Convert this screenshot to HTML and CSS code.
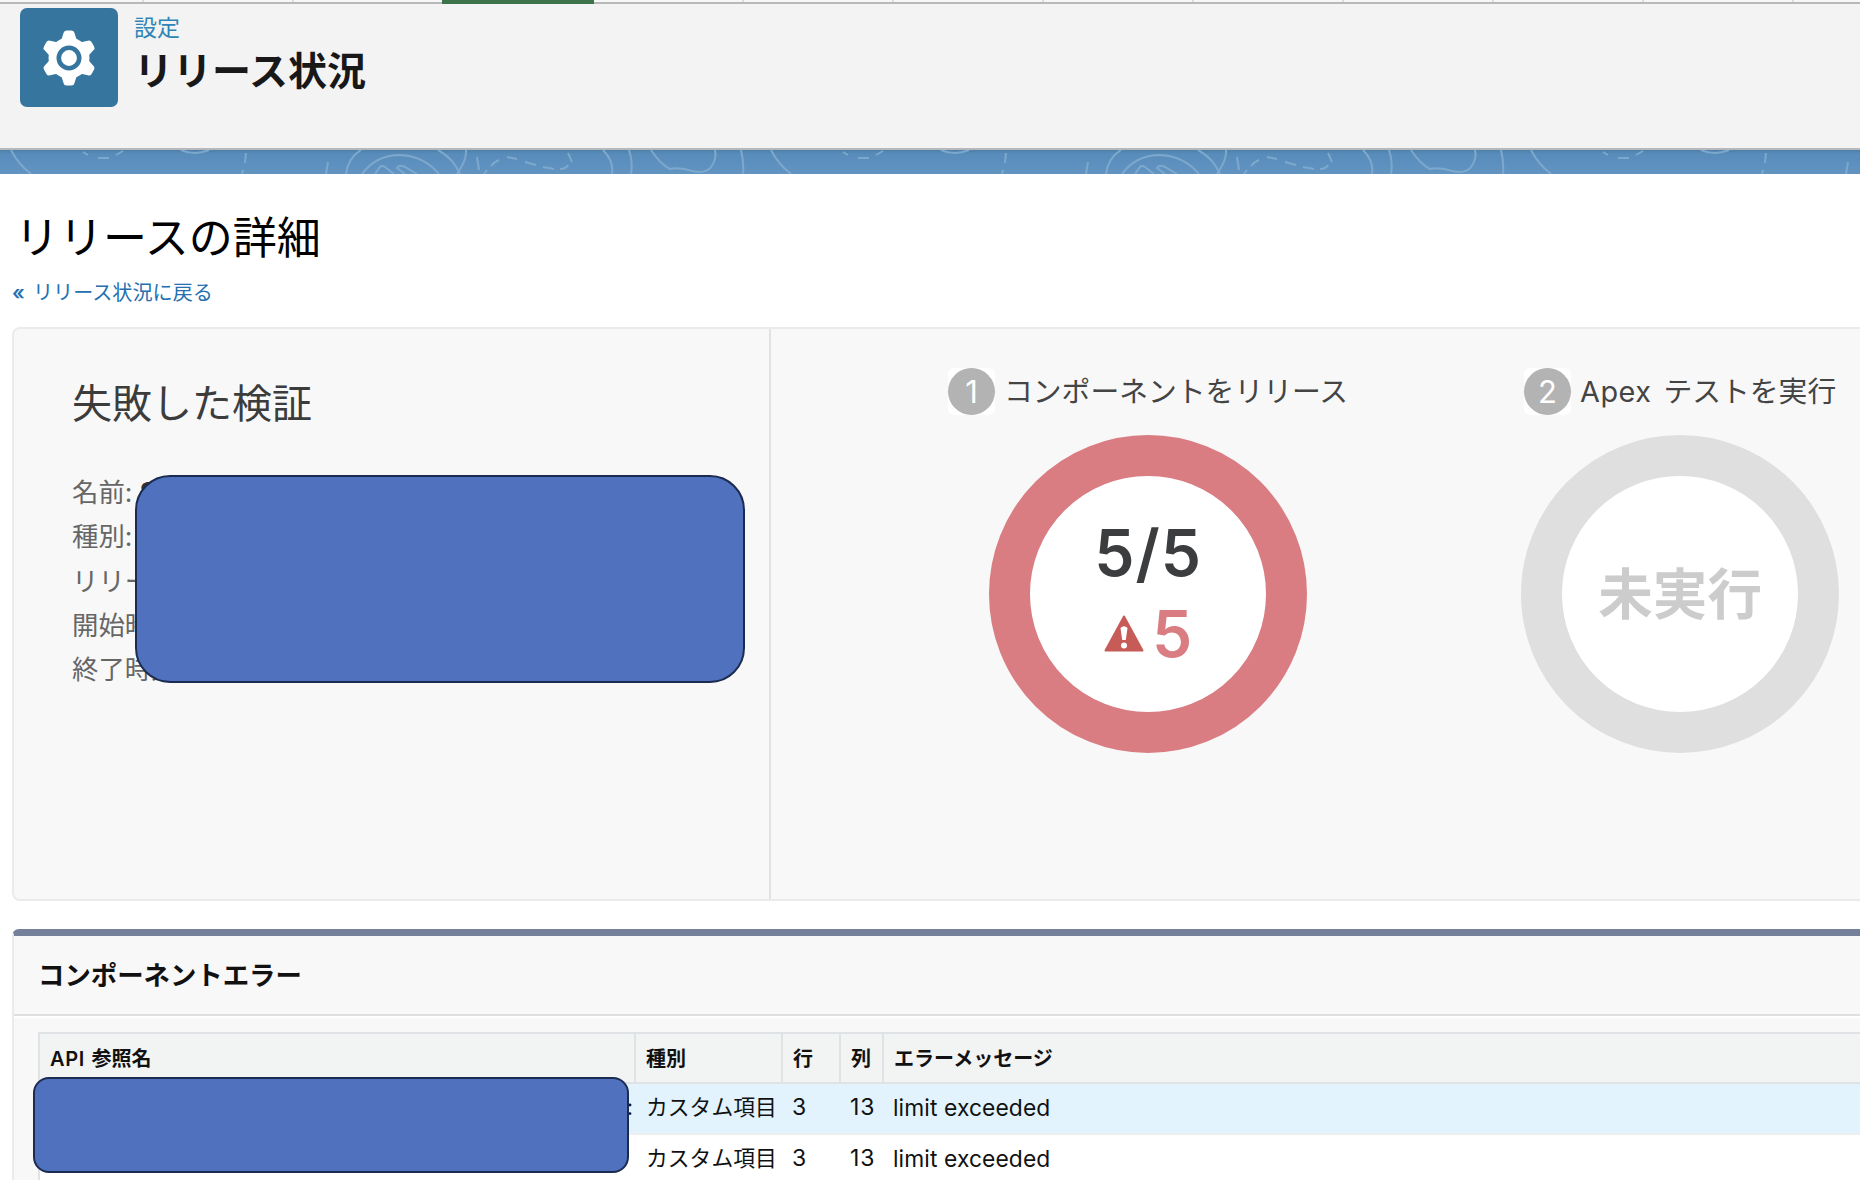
FILE: index.html
```html
<!DOCTYPE html>
<html lang="ja">
<head>
    <meta charset="UTF-8" />
    <title>リリース状況</title>
    <link rel="stylesheet" href="styles.css">
</head>
<body>

<div class="sheet-row">
    <span></span><span></span><span></span><span class="selected"></span><span></span><span></span><span></span>
    <span></span><span></span><span></span><span></span><span></span><span></span>
</div>

<header class="page-header">
    <div class="header-icon">
        <svg width="56" height="60" viewBox="-28 -30 56 60">
            <g fill="#fff">
                <circle r="20.5" />
                <path id="tooth" d="M-8 -17 L-5.5 -25 Q-5 -27.5 -2.5 -27.5 H2.5 Q5 -27.5 5.5 -25 L8 -17 Z" />
                <use href="#tooth" transform="rotate(60)" />
                <use href="#tooth" transform="rotate(120)" />
                <use href="#tooth" transform="rotate(180)" />
                <use href="#tooth" transform="rotate(240)" />
                <use href="#tooth" transform="rotate(300)" />
            </g>
            <circle r="10.2" fill="#fff" stroke="#35759e" stroke-width="4.6" />
        </svg>
    </div>
    <div class="header-text">
        <div class="header-sub">設定</div>
        <h1>リリース状況</h1>
    </div>
</header>

<div class="band">
    <svg width="1860" height="24">
        <defs>
            <pattern id="map" width="760" height="24" patternUnits="userSpaceOnUse">
                <g fill="none" stroke="#7da8cd" stroke-width="2">
                    <path d="M11 0 Q18 14 31 24" />
                    <path d="M83 2 L88 5 M98 8 H109 M116 5 L123 1" />
                    <path d="M181 0 Q195 6 209 0" />
                    <path d="M246 3 L245 13 M243 20 L242 24 M328 12 L326 24" />
                    <path d="M346 24 Q348 8 361 0 M438 0 Q453 8 460 24" />
                    <path d="M362 24 Q376 5 400 5 Q424 6 439 24" />
                    <path d="M375 24 L380 17 Q382 15 385 17 L394 24 M405 24 L397 18 Q399 14 405 17 L417 24" />
                    <path d="M466 0 Q467 10 457 24" />
                    <path d="M477 7 L479 20 M484 24 L487 20 M491 16 Q494 12 499 10 M507 7 L517 9 M525 12 L536 15 M543 17 L554 19 M560 19 Q566 19 568 15 M568 3 L572 12" />
                    <path d="M603 0 Q614 11 612 24 M629 0 Q633 11 631 24" />
                    <path d="M651 0 Q660 14 670 19 Q680 17 692 21 Q706 24 711 17 Q717 9 715 0" />
                    <path d="M741 0 Q744 12 743 24" />
                </g>
            </pattern>
        </defs>
        <rect width="1860" height="24" fill="url(#map)" />
    </svg>
</div>

<main>
    <h2>リリースの詳細</h2>
    <a class="back-link" href="#"><span class="laquo">«</span>リリース状況に戻る</a>

    <section class="status">
        <div class="summary">
            <h3>失敗した検証</h3>
            <ul>
                <li>名前: <b>S</b></li>
                <li>種別:</li>
                <li>リリース:</li>
                <li>開始時刻:</li>
                <li>終了時刻:</li>
            </ul>
            <div class="mask mask-summary"></div>
        </div>
        <div class="steps">
            <div class="step">
                <div class="step-title"><span class="num"><i>1</i></span><span class="label">コンポーネントをリリース</span></div>
                <div class="ring failed">
                    <div class="count">5/5</div>
                    <div class="errors">
                        <svg width="40" height="38" viewBox="0 0 40 38">
                            <path d="M20 1.5 L38.5 35.5 H1.5 Z" fill="#c65b57" stroke="#c65b57" stroke-width="2" stroke-linejoin="round" />
                            <path d="M16.5 13 Q20 9.5 23.5 13 L21.8 25 H18.2 Z" fill="#fff" />
                            <circle cx="20" cy="30.5" r="3" fill="#fff" />
                        </svg>
                        <span>5</span>
                    </div>
                </div>
            </div>
            <div class="step">
                <div class="step-title"><span class="num"><i>2</i></span><span class="label"><span class="latin">Apex</span>テストを実行</span></div>
                <div class="ring idle"><span>未実行</span></div>
            </div>
        </div>
    </section>

    <section class="error-block">
        <h4>コンポーネントエラー</h4>
        <div class="table-wrap">
            <table>
                <colgroup><col class="c-name"><col class="c-type"><col class="c-line"><col class="c-col"><col></colgroup>
                <thead>
                <tr><th><span class="api">API</span> 参照名</th><th>種別</th><th>行</th><th>列</th><th>エラーメッセージ</th></tr>
                </thead>
                <tbody>
                <tr class="hover"><td class="name">:</td><td class="type">カスタム項目</td><td class="n">3</td><td class="n">13</td><td class="msg">limit exceeded</td></tr>
                <tr><td></td><td class="type">カスタム項目</td><td class="n">3</td><td class="n">13</td><td class="msg">limit exceeded</td></tr>
                </tbody>
            </table>
            <div class="mask mask-table"></div>
        </div>
    </section>
</main>

</body>
</html>
```
FILE: styles.css
```css
* {
    box-sizing: border-box;
}

body {
    margin: 0;
    width: 1860px;
    height: 1180px;
    overflow: hidden;
    background: #fff;
    color: #111;
    font-family: Inter, "Noto Sans CJK JP", sans-serif;
}

h1, h2, h3, h4, ul {
    margin: 0;
    padding: 0;
    font-weight: normal;
}

.sheet-row {
    display: flex;
    height: 4px;
    background: linear-gradient(#f7f7f7 2px, #b8b8b8 2px);
}

.sheet-row span {
    flex: none;
    width: 150px;
    height: 2px;
    border-right: 2px solid #dcdcdc;
}

.sheet-row span:first-child {
    width: 144px;
}

.sheet-row .selected {
    height: 4px;
    width: 152px;
    margin-left: -2px;
    border: none;
    background: #3c734b;
}

.page-header {
    display: flex;
    height: 146px;
    padding: 4px 0 0 20px;
    background: #f3f3f3;
    border-bottom: 2px solid #b5b9bc;
}

.header-icon {
    display: flex;
    align-items: center;
    justify-content: center;
    width: 98px;
    height: 99px;
    border-radius: 7px;
    background: #35759e;
}

.header-text {
    margin-left: 16px;
}

.header-sub {
    margin-top: 5px;
    font-size: 23px;
    line-height: 30px;
    color: #2f85b5;
}

h1 {
    font-size: 39px;
    line-height: 56px;
    font-weight: bold;
    color: #181818;
}

.band {
    height: 24px;
    background: linear-gradient(#4d7fab, #588cba 4px, #6294c2);
}

.band svg {
    display: block;
}

main {
    padding-left: 12px;
}

h2 {
    padding: 32px 0 0 3px;
    font-size: 44px;
    line-height: 64px;
    color: #000;
}

.back-link {
    display: block;
    margin-top: 8px;
    font-size: 20.1px;
    line-height: 30px;
    color: #2470b0;
    text-decoration: none;
}

.laquo {
    display: inline-block;
    width: 21px;
    font-weight: 600;
}

.status {
    display: flex;
    height: 574px;
    margin-top: 19px;
    border: 2px solid #ebebeb;
    border-right: none;
    border-radius: 8px 0 0 8px;
    background: #f8f8f8;
}

.summary {
    position: relative;
    width: 757px;
    padding: 45px 0 0 58px;
    border-right: 2px solid #e2e2e2;
}

h3 {
    font-size: 40px;
    line-height: 60px;
    color: #3c3c3c;
}

.summary ul {
    margin-top: 36px;
    list-style: none;
    font-size: 26.4px;
    line-height: 44.3px;
    color: #666;
}

.summary b {
    color: #333;
}

/* blue cover shapes, drawn over the content below them */
.mask {
    position: absolute;
    background: #5071bd;
    border: 2px solid #1c2c50;
}

.mask-summary {
    left: 121px;
    top: 146px;
    width: 610px;
    height: 208px;
    border-radius: 35px;
}

.steps {
    display: flex;
    gap: 173px;
    padding: 39px 0 0 177px;
}

.step {
    display: flex;
    flex-direction: column;
    align-items: center;
}

.step-title {
    display: flex;
    align-items: center;
    height: 47px;
    white-space: nowrap;
    font-size: 28.8px;
    color: #444;
}

.label {
    padding-bottom: 4px;
}

.num {
    width: 47px;
    height: 47px;
    margin-right: 9px;
    background: #fff;
    border-radius: 6px;
}

.num i {
    display: block;
    border-radius: 50%;
    background: #b3b3b3;
    color: #fff;
    font-size: 31px;
    font-style: normal;
    line-height: 47px;
    text-align: center;
}

.latin {
    margin-right: 12px;
    letter-spacing: 0.5px;
}

.ring {
    display: flex;
    flex-direction: column;
    align-items: center;
    justify-content: center;
    width: 318px;
    height: 318px;
    margin-top: 20px;
    border: 41px solid #d97d82;
    border-radius: 50%;
    background: #fff;
}

.count,
.errors {
    margin-top: -1px;
    font-size: 64px;
    font-weight: 600;
    line-height: 82px;
    color: #3b3d3f;
}

.count {
    letter-spacing: 1px;
}

.errors {
    display: flex;
    align-items: center;
    gap: 8px;
    color: #d97d82;
}

.idle {
    border-color: #dfdfdf;
    font-size: 54.6px;
    font-weight: bold;
    color: #ccc;
}

.idle span {
    padding-bottom: 8px;
}

.error-block {
    margin-top: 28px;
    height: 260px;
    border-top: 7px solid #75819a;
    border-left: 2px solid #ebebeb;
    border-radius: 7px 0 0 0;
    background: #f8f8f8;
}

h4 {
    height: 80px;
    padding-left: 24px;
    border-bottom: 2px solid #dfdfdf;
    font-size: 26.4px;
    font-weight: bold;
    line-height: 78px;
}

.table-wrap {
    position: relative;
    padding: 16px 0 0 24px;
    box-shadow: inset 0 2px #fff;
}

table {
    width: 1830px;
    table-layout: fixed;
    border-collapse: separate;
    border-spacing: 0;
    border-top: 2px solid #e0e3e5;
    border-left: 2px solid #e0e3e5;
    background: #fff;
}

.c-name { width: 596px; }
.c-type { width: 147px; }
.c-line { width: 58px; }
.c-col { width: 43px; }

th, td {
    padding: 0 0 3px 10px;
    text-align: left;
    white-space: nowrap;
}

th {
    height: 50px;
    padding-bottom: 1px;
    font-size: 20px;
    background: #f2f3f3;
    border-right: 2px solid #e0e3e5;
    border-bottom: 2px solid #e0e3e5;
}

.api {
    margin-right: 2px;
    letter-spacing: 0.6px;
    font-weight: 600;
}

td {
    height: 51px;
    font-size: 21.8px;
    border-bottom: 2px solid #eceeef;
}

.hover td {
    background: #e2f3fe;
}

.name {
    padding-right: 3px;
    text-align: right;
}

.type {
    padding-bottom: 6px;
}

.n {
    padding-left: 9px;
    font-size: 23px;
    letter-spacing: 0.8px;
}

.msg {
    padding-left: 9px;
    font-size: 22.8px;
    letter-spacing: 0.1px;
}

.mask-table {
    left: 19px;
    top: 61px;
    width: 596px;
    height: 96px;
    border-radius: 16px;
}
```
